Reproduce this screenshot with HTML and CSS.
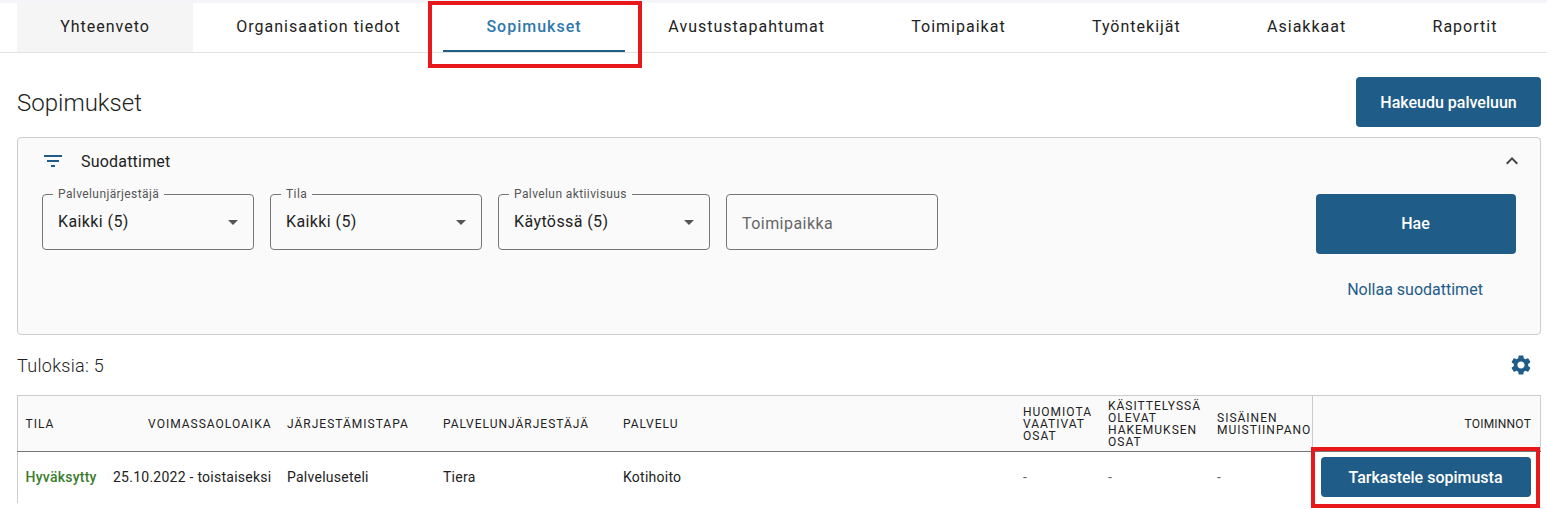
FILE: index.html
```html
<!DOCTYPE html>
<html lang="fi">
<head>
    <meta charset="UTF-8">
    <title>Sopimukset</title>
    <link rel="stylesheet" href="styles.css">
</head>
<body>
    <div class="page">
        <nav class="tabs">
            <a class="tab tab-hover">Yhteenveto</a>
            <a class="tab">Organisaation tiedot</a>
            <a class="tab tab-active">Sopimukset</a>
            <a class="tab">Avustustapahtumat</a>
            <a class="tab">Toimipaikat</a>
            <a class="tab">Työntekijät</a>
            <a class="tab">Asiakkaat</a>
            <a class="tab">Raportit</a>
        </nav>

        <div class="title-row">
            <h1>Sopimukset</h1>
            <button class="btn btn-apply">Hakeudu palveluun</button>
        </div>

        <section class="filters">
            <div class="filters-head">
                <svg class="filter-icon" viewBox="0 0 24 24"><path d="M10 18h4v-2h-4v2zM3 6v2h18V6H3zm3 7h12v-2H6v2z"/></svg>
                <span>Suodattimet</span>
                <svg class="chevron" viewBox="0 0 24 24"><path d="M12 8l-6 6 1.41 1.41L12 10.83l4.59 4.58L18 14z"/></svg>
            </div>
            <div class="filters-body">
                <div class="field">
                    <span class="field-label">Palvelunjärjestäjä</span>
                    <span class="field-value">Kaikki (5)</span>
                    <span class="caret"></span>
                </div>
                <div class="field">
                    <span class="field-label">Tila</span>
                    <span class="field-value">Kaikki (5)</span>
                    <span class="caret"></span>
                </div>
                <div class="field">
                    <span class="field-label">Palvelun aktiivisuus</span>
                    <span class="field-value">Käytössä (5)</span>
                    <span class="caret"></span>
                </div>
                <div class="field">
                    <span class="field-placeholder">Toimipaikka</span>
                </div>
                <div class="filter-actions">
                    <button class="btn btn-search">Hae</button>
                    <a class="reset-link">Nollaa suodattimet</a>
                </div>
            </div>
        </section>

        <div class="results-row">
            <span class="results-count">Tuloksia: 5</span>
            <svg class="gear" viewBox="0 0 24 24"><path d="M19.14 12.94c.04-.3.06-.61.06-.94 0-.32-.02-.64-.07-.94l2.03-1.58c.18-.14.23-.41.12-.61l-1.92-3.32c-.12-.22-.37-.29-.59-.22l-2.39.96c-.5-.38-1.03-.7-1.62-.94l-.36-2.54c-.04-.24-.24-.41-.48-.41h-3.84c-.24 0-.43.17-.47.41l-.36 2.54c-.59.24-1.13.57-1.62.94l-2.39-.96c-.22-.08-.47 0-.59.22L2.74 8.87c-.12.21-.08.47.12.61l2.03 1.58c-.05.3-.09.63-.09.94s.02.64.07.94l-2.03 1.58c-.18.14-.23.41-.12.61l1.92 3.32c.12.22.37.29.59.22l2.39-.96c.5.38 1.03.7 1.62.94l.36 2.54c.05.24.24.41.48.41h3.84c.24 0 .44-.17.47-.41l.36-2.54c.59-.24 1.13-.56 1.62-.94l2.39.96c.22.08.47 0 .59-.22l1.92-3.32c.12-.22.07-.47-.12-.61l-2.01-1.58zM12 15.6c-1.98 0-3.6-1.62-3.6-3.6s1.62-3.6 3.6-3.6 3.6 1.62 3.6 3.6-1.62 3.6-3.6 3.6z"/></svg>
        </div>

        <table class="contracts">
            <colgroup>
                <col class="col-status">
                <col class="col-validity">
                <col class="col-method">
                <col class="col-provider">
                <col class="col-service">
                <col class="col-attention">
                <col class="col-processing">
                <col class="col-note">
                <col class="col-actions">
            </colgroup>
            <thead>
                <tr>
                    <th>Tila</th>
                    <th class="align-right">Voimassaoloaika</th>
                    <th>Järjestämistapa</th>
                    <th>Palvelunjärjestäjä</th>
                    <th>Palvelu</th>
                    <th>Huomiota vaativat osat</th>
                    <th>Käsittelyssä olevat hakemuksen osat</th>
                    <th>Sisäinen muistiinpano</th>
                    <th class="align-right th-actions">Toiminnot</th>
                </tr>
            </thead>
            <tbody>
                <tr>
                    <td class="status-ok">Hyväksytty</td>
                    <td class="align-right">25.10.2022 - toistaiseksi</td>
                    <td>Palveluseteli</td>
                    <td>Tiera</td>
                    <td>Kotihoito</td>
                    <td class="empty">-</td>
                    <td class="empty">-</td>
                    <td class="empty">-</td>
                    <td class="td-actions"><button class="btn btn-view">Tarkastele sopimusta</button></td>
                </tr>
            </tbody>
        </table>

        <!-- punaiset korostukset kuvakaappauksen päällä -->
        <div class="highlight highlight-tab"></div>
        <div class="highlight highlight-action"></div>
    </div>
</body>
</html>
```

FILE: styles.css
```css
* {
    box-sizing: border-box;
}
html, body {
    margin: 0;
    padding: 0;
    height: 509px;
    overflow: hidden;
}
body {
    font-family: Roboto, "Liberation Sans", sans-serif;
    color: #222;
    background: #fff;
}
.page {
    position: relative;
    height: 509px;
    padding-top: 3px;
    background: linear-gradient(#f3f5f8 3px, #fff 3px);
}
.tabs {
    display: flex;
    height: 50px;
    padding-left: 17px;
    background: #fff;
    border-bottom: 1px solid #e2e2e2;
}
.tab {
    display: flex;
    align-items: center;
    justify-content: center;
    padding: 0 43.15px 2px;
    font-size: 16px;
    letter-spacing: 1px;
    color: #222;
}
.tab-hover {
    background: #f5f5f5;
}
.tab-active {
    margin-left: -0.5px;
    padding-right: 43.65px;
    color: #2f78ad;
    font-weight: 500;
    box-shadow: inset 0 -2px 0 #1f5c87;
}
.title-row {
    display: flex;
    justify-content: space-between;
    align-items: center;
    height: 50px;
    margin: 24px 6px 10px 17px;
}
h1 {
    margin: 2px 0 0;
    font-size: 24px;
    font-weight: 300;
}
.btn {
    border: none;
    border-radius: 4px;
    background: #1f5c87;
    color: #fff;
    font-family: inherit;
    font-size: 16px;
    font-weight: 500;
    cursor: pointer;
}
.btn-apply {
    width: 185px;
    height: 50px;
}
.filters {
    height: 198px;
    margin: 0 6px 0 17px;
    padding: 0 24px;
    background: #fafafa;
    border: 1px solid #ccc;
    border-radius: 4px;
}
.filters-head {
    display: flex;
    align-items: center;
    height: 46px;
    font-size: 16px;
    letter-spacing: 0.2px;
}
.filter-icon {
    width: 24px;
    height: 24px;
    margin: 0 16px 0 -1px;
    fill: #1f5c87;
}
.chevron {
    width: 24px;
    height: 24px;
    margin-left: auto;
    margin-right: -8px;
    fill: #444;
}
.filters-body {
    display: flex;
    gap: 16px;
    margin-top: 10px;
}
.field {
    position: relative;
    display: flex;
    align-items: center;
    width: 212px;
    height: 56px;
    padding: 0 15px;
    border: 1px solid #767676;
    border-radius: 4px;
    font-size: 16px;
}
.field-label {
    position: absolute;
    top: -8px;
    left: 10px;
    padding: 0 5px;
    background: #fafafa;
    font-size: 12px;
    letter-spacing: 0.4px;
    color: #555;
}
.field-value {
    margin-top: -1px;
    letter-spacing: 0.4px;
}
.field-placeholder {
    margin-top: 2px;
    color: #666;
    letter-spacing: 0.45px;
}
.caret {
    position: absolute;
    top: 25px;
    right: 15px;
    border-left: 5px solid transparent;
    border-right: 5px solid transparent;
    border-top: 5px solid #555;
}
.filter-actions {
    display: flex;
    flex-direction: column;
    align-items: center;
    width: 200px;
    margin-left: auto;
}
.btn-search {
    width: 200px;
    height: 60px;
    padding: 0 1px 2px 0;
}
.reset-link {
    margin: 26px 2px 0 0;
    font-size: 16px;
    color: #1f5c87;
}
.results-row {
    display: flex;
    justify-content: space-between;
    align-items: center;
    height: 60px;
    margin: 0 14px 0 17px;
}
.results-count {
    font-size: 18px;
    font-weight: 300;
    letter-spacing: 0.3px;
}
.gear {
    width: 24px;
    height: 24px;
    fill: #1f5c87;
}
.contracts {
    width: 1523px;
    margin-left: 17px;
    table-layout: fixed;
    border-collapse: collapse;
    font-size: 14px;
    letter-spacing: 0.25px;
}
.col-status { width: 88px; }
.col-validity { width: 174px; }
.col-method { width: 156px; }
.col-provider { width: 180px; }
.col-service { width: 400px; }
.col-attention { width: 85px; }
.col-processing { width: 109px; }
.col-note { width: 103px; }
.col-actions { width: 228px; }
.contracts th {
    height: 56px;
    padding: 0 8px 0 7.5px;
    background: #fafafa;
    border-top: 1px solid #ccc;
    border-bottom: 1px solid #767676;
    font-size: 12px;
    font-weight: 400;
    line-height: 12px;
    letter-spacing: 1px;
    text-align: left;
    text-transform: uppercase;
    white-space: normal;
}
.contracts th:first-child,
.contracts td:first-child {
    border-left: 1px solid #ccc;
}
.contracts th.align-right,
.contracts td.align-right {
    text-align: right;
}
.contracts td.align-right {
    padding-right: 8.5px;
}
.contracts th.th-actions {
    border-left: 1px solid #ccc;
    border-right: 1px solid #ccc;
    padding-right: 9px;
    letter-spacing: 0.2px;
}
.contracts td {
    height: 51px;
    padding: 0 8px 1px 7.5px;
    white-space: nowrap;
}
.status-ok {
    color: #3a7d2c;
    font-weight: 500;
}
.empty {
    color: #666;
}
.contracts td.td-actions {
    padding: 0 8px;
}
.btn-view {
    width: 210px;
    height: 40px;
    letter-spacing: 0;
}
.highlight {
    position: absolute;
    border: 4px solid #e8171c;
}
.highlight-tab {
    left: 428px;
    top: 1px;
    width: 214px;
    height: 67px;
}
.highlight-action {
    left: 1311px;
    top: 447px;
    width: 229px;
    height: 61px;
}
```
